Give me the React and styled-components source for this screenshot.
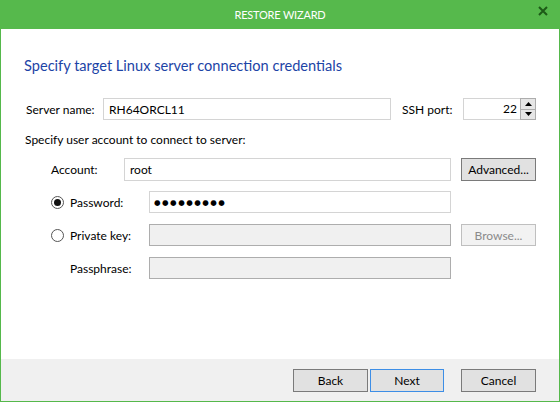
import React from "react";
import styled, { createGlobalStyle } from "styled-components";

const Global = createGlobalStyle`
  html, body { margin: 0; padding: 0; background: #fff; }
  body { font-family: Lato, "Noto Sans", sans-serif; font-size: 12px; color: #000; }
  * { box-sizing: border-box; }
`;

const Window = styled.div`
  width: 560px;
  height: 402px;
  display: flex;
  flex-direction: column;
  border: 1px solid #55b84b;
  border-top: none;
  background: #fff;
`;

const TitleBar = styled.div`
  height: 29px;
  margin: 0 -1px;
  background: #56b94c;
  color: #fff;
  display: flex;
  align-items: center;
  justify-content: center;
  position: relative;
  font-size: 11px;
  letter-spacing: -0.2px;
`;

const Close = styled.div`
  position: absolute;
  right: 12px;
  top: 5px;
  width: 10px;
  height: 10px;
`;

const Content = styled.div`
  flex: 1;
  display: flex;
  flex-direction: column;
  padding: 27px 23px 0 23px;
`;

const Heading = styled.div`
  font-size: 14.6px;
  line-height: 20px;
  color: #1c44a6;
  margin-bottom: 22px;
`;

const Row = styled.div`
  display: flex;
  align-items: center;
  height: ${(p) => p.h || 22}px;
  margin-top: ${(p) => p.mt || 0}px;
  padding-left: ${(p) => p.indent || 0}px;
`;

const Label = styled.div`
  width: ${(p) => p.w}px;
  padding-left: ${(p) => p.pl || 0}px;
  flex: none;
  white-space: nowrap;
`;

const Text = styled.div`
  line-height: 20px;
  margin-top: 10px;
  padding-left: 1px;
`;

const Input = styled.input`
  width: ${(p) => p.w}px;
  height: 100%;
  flex: none;
  border: 1px solid ${(p) => (p.disabled ? "#adadad" : "#d4d4d4")};
  background: ${(p) => (p.disabled ? "#f0f0f0" : "#fff")};
  font-family: Lato, "Noto Sans", sans-serif;
  font-size: 12px;
  color: #000;
  padding: 0 5px;
  margin: 0;
  outline: none;
  border-radius: 0;
`;

const Dots = styled(Input)`
  font-family: "DejaVu Sans", sans-serif;
  font-size: 7.5px;
  letter-spacing: 1.5px;
  padding-left: 4px;
`;

const Spin = styled.div`
  width: 73px;
  height: 22px;
  flex: none;
  margin-left: auto;
  display: flex;
  border: 1px solid #d4d4d4;
  background: #fff;
`;

const SpinValue = styled.div`
  flex: 1;
  text-align: right;
  padding-right: 3px;
  line-height: 20px;
`;

const SpinButtons = styled.div`
  width: 16px;
  display: flex;
  flex-direction: column;
  margin: -1px -1px -1px 0;
`;

const SpinBtn = styled.div`
  flex: 1;
  background: #e6e6e6;
  border: 1px solid #adadad;
  margin-top: ${(p) => (p.down ? "-1px" : "0")};
  display: flex;
  align-items: center;
  justify-content: center;
`;

const Button = styled.div`
  width: ${(p) => p.w || 75}px;
  height: ${(p) => p.h || 23}px;
  flex: none;
  display: flex;
  align-items: center;
  justify-content: center;
  background: ${(p) => (p.disabled ? "#f2f2f2" : "#e1e1e1")};
  border: 1px solid ${(p) => (p.primary ? "#3d8ee6" : p.disabled ? "#bfbfbf" : "#7a7a7a")};
  color: ${(p) => (p.disabled ? "#8a8a8a" : "#000")};
  margin-left: ${(p) => p.ml || 0}px;
  font-size: 12px;
`;

const Radio = styled.span`
  width: 13px;
  height: 13px;
  border-radius: 50%;
  border: 1px solid #555;
  background: #fff;
  display: inline-flex;
  align-items: center;
  justify-content: center;
  margin-right: 6px;
  flex: none;
  &::after {
    content: "";
    width: 7px;
    height: 7px;
    border-radius: 50%;
    background: ${(p) => (p.checked ? "#111" : "transparent")};
  }
`;

const RadioLabel = styled.div`
  width: ${(p) => p.w}px;
  display: flex;
  align-items: center;
  flex: none;
  padding-left: ${(p) => p.pl || 0}px;
  white-space: nowrap;
`;

const Footer = styled.div`
  height: 42px;
  background: #f0f0f0;
  display: flex;
  align-items: flex-start;
  justify-content: flex-end;
  padding: 10px 23px 0 0;
`;

const Arrow = ({ up }) => (
  <svg width="7" height="4" viewBox="0 0 7 4">
    {up ? <path d="M0 4 L3.5 0 L7 4 Z" fill="#000" /> : <path d="M0 0 L3.5 4 L7 0 Z" fill="#000" />}
  </svg>
);

export default function App() {
  return (
    <>
      <Global />
      <Window>
        <TitleBar>
          RESTORE WIZARD
          <Close>
            <svg width="10" height="10" viewBox="0 0 10 10">
              <path d="M1 1 L9 9 M9 1 L1 9" stroke="#1d5a17" strokeWidth="2" />
            </svg>
          </Close>
        </TitleBar>
        <Content>
          <Heading>Specify target Linux server connection credentials</Heading>
          <Row>
            <Label w={79} pl={2}>Server name:</Label>
            <Input w={288} defaultValue="RH64ORCL11" />
            <Label w={58} pl={11}>SSH port:</Label>
            <Spin>
              <SpinValue>22</SpinValue>
              <SpinButtons>
                <SpinBtn><Arrow up /></SpinBtn>
                <SpinBtn down><Arrow /></SpinBtn>
              </SpinButtons>
            </Spin>
          </Row>
          <Text>Specify user account to connect to server:</Text>
          <Row h={23} mt={8} indent={27}>
            <Label w={73}>Account:</Label>
            <Input w={327} defaultValue="root" />
            <Button ml={10} w={75}>Advanced...</Button>
          </Row>
          <Row mt={10} indent={27}>
            <RadioLabel w={98}><Radio checked />Password:</RadioLabel>
            <Dots w={302} defaultValue="●●●●●●●●●" readOnly />
          </Row>
          <Row mt={11} indent={27}>
            <RadioLabel w={98}><Radio />Private key:</RadioLabel>
            <Input w={302} disabled />
            <Button ml={10} w={75} h={22} disabled>Browse...</Button>
          </Row>
          <Row mt={11} indent={27}>
            <RadioLabel w={98} pl={19}>Passphrase:</RadioLabel>
            <Input w={302} disabled />
          </Row>
        </Content>
        <Footer>
          <Button>Back</Button>
          <Button ml={2} w={74} primary>Next</Button>
          <Button ml={17}>Cancel</Button>
        </Footer>
      </Window>
    </>
  );
}
